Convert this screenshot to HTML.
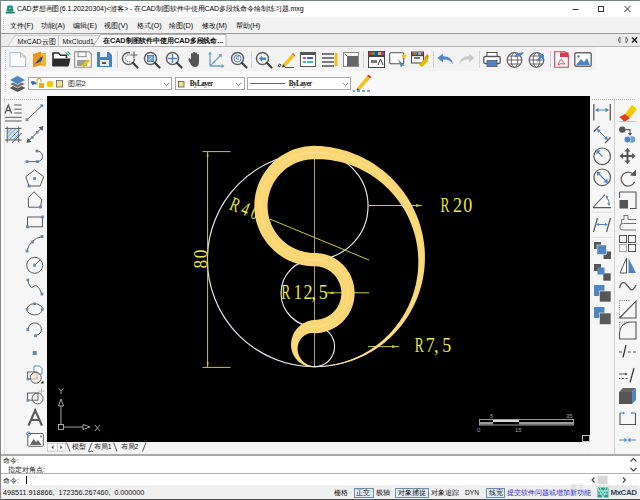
<!DOCTYPE html>
<html><head><meta charset="utf-8">
<style>
*{margin:0;padding:0;box-sizing:border-box}
html,body{width:640px;height:500px;overflow:hidden;background:#f0f0f0;font-family:"Liberation Sans",sans-serif;font-size:7px;color:#222}
.a{position:absolute}
.t{position:absolute;white-space:nowrap;line-height:1}
svg{position:absolute;overflow:visible}
</style></head><body>

<div class="a" style="left:0;top:0;width:640px;height:17px;background:#fff"></div>
<div class="a" style="left:0;top:0;width:640px;height:1px;background:#6f8577"></div>
<div class="a" style="left:0;top:17px;width:640px;height:16px;background:#f2f2f2"></div>
<div class="a" style="left:0;top:33px;width:640px;height:13px;background:#ececec;border-top:1px solid #9a9a9a"></div>
<div class="a" style="left:0;top:46px;width:640px;height:1px;background:#b4b4b4"></div>
<div class="a" style="left:0;top:47px;width:640px;height:49px;background:#f8f8f8"></div>
<div class="a" style="left:0;top:47px;width:596px;height:24px;background:#f3f3f3"></div>
<div class="a" style="left:0;top:96px;width:47px;height:359px;background:#f6f6f6"></div>
<div class="a" style="left:1px;top:96px;width:4px;height:358px;background:#fbfbfb;border-right:1px solid #e4e4e4"></div>
<div class="a" style="left:47px;top:96px;width:543px;height:346px;background:#000"></div>
<div class="a" style="left:590px;top:96px;width:50px;height:359px;background:#f6f6f6"></div>
<div class="a" style="left:614px;top:98px;width:1px;height:356px;background:#d0d0d0"></div>
<div class="a" style="left:47px;top:442px;width:543px;height:13px;background:#f4f4f4"></div>
<div class="a" style="left:0;top:454px;width:640px;height:2px;background:#a8a8a8"></div>
<div class="a" style="left:0;top:456px;width:640px;height:29px;background:#fff"></div>
<div class="a" style="left:0;top:473px;width:640px;height:1px;background:#b4b4b4"></div>
<div class="a" style="left:0;top:485px;width:640px;height:15px;background:#f0f0f0"></div>
<div class="a" style="left:0;top:499px;width:640px;height:1px;background:#505050"></div>
<div class="a" style="left:0;top:0;width:1px;height:500px;background:#8a8a8a"></div>
<svg style="left:5.0px;top:4.0px" width="11" height="10" viewBox="0 0 11 10"><path d="M2.5 1.5 h5 l1.2 6 h-7.4z" fill="#1a8f7a"/><path d="M0.5 8.2 q4.5 -1.5 9.5 -0.2 l-0.6 1.4 h-8.4z" fill="#13806c"/><path d="M4 5 l1-2 l1 2z" fill="#9fe8d5"/></svg>
<div class="t" style="left:17.0px;top:4.5px;font-size:7.0px;color:#000;letter-spacing:-0.05px;">CAD梦想画图(6.1.20220304)&lt;游客&gt; - 在CAD制图软件中使用CAD多段线命令绘制练习题.mxg</div>
<svg style="left:570.0px;top:4.0px" width="64" height="10" viewBox="0 0 64 10"><path d="M2.5 5.5 h6" stroke="#333" stroke-width="1"/><rect x="28.5" y="2.5" width="5" height="5" fill="none" stroke="#333"/><path d="M54.5 2 l6 6 M60.5 2 l-6 6" stroke="#333" stroke-width="1"/></svg>
<svg style="left:3.0px;top:19.0px" width="2" height="12" viewBox="0 0 2 12"><rect x="0" y="0" width="1" height="1" fill="#c4c4c4"/><rect x="0" y="2" width="1" height="1" fill="#c4c4c4"/><rect x="0" y="4" width="1" height="1" fill="#c4c4c4"/><rect x="0" y="6" width="1" height="1" fill="#c4c4c4"/><rect x="0" y="8" width="1" height="1" fill="#c4c4c4"/><rect x="0" y="10" width="1" height="1" fill="#c4c4c4"/></svg>
<div class="t" style="left:10.0px;top:21.5px;font-size:7.4px;color:#0a0a0a;">文件(F)</div>
<div class="t" style="left:41.0px;top:21.5px;font-size:7.4px;color:#0a0a0a;">功能(A)</div>
<div class="t" style="left:73.0px;top:21.5px;font-size:7.4px;color:#0a0a0a;">编辑(E)</div>
<div class="t" style="left:104.0px;top:21.5px;font-size:7.4px;color:#0a0a0a;">视图(V)</div>
<div class="t" style="left:137.0px;top:21.5px;font-size:7.4px;color:#0a0a0a;">格式(O)</div>
<div class="t" style="left:169.0px;top:21.5px;font-size:7.4px;color:#0a0a0a;">绘图(D)</div>
<div class="t" style="left:202.0px;top:21.5px;font-size:7.4px;color:#0a0a0a;">修改(M)</div>
<div class="t" style="left:236.0px;top:21.5px;font-size:7.4px;color:#0a0a0a;">帮助(H)</div>
<svg style="left:0.0px;top:33.0px" width="640" height="14" viewBox="0 0 640 14"><path d="M8 13 L15 2.5 H58.5 V13" fill="#f3f3f3" stroke="#c0c0c0" stroke-width="0.8"/><path d="M58.5 13 V2.5 H100 L93 13" fill="#f3f3f3" stroke="#c0c0c0" stroke-width="0.8"/><path d="M93 13.5 L100.5 1.5 H226 V13.5z" fill="#fbfbfb" stroke="#a8a8a8" stroke-width="0.8"/><path d="M620 4 l-2 3 l2 3z M626 4 l2 3 l-2 3z" fill="none" stroke="#555" stroke-width="0.8"/><path d="M632 4.5 l5 5 M637 4.5 l-5 5" stroke="#111" stroke-width="1.3"/></svg>
<div class="t" style="left:17.5px;top:37.5px;font-size:7.0px;color:#111;">MxCAD云图</div>
<div class="t" style="left:62.5px;top:37.5px;font-size:7.0px;color:#111;">MxCloud1</div>
<div class="t" style="left:103.0px;top:37.0px;font-size:7.4px;color:#111;font-weight:bold;letter-spacing:-0.1px;">在CAD制图软件中使用CAD多段线命...</div>
<svg style="left:5.0px;top:50.0px" width="2" height="20" viewBox="0 0 2 20"><rect x="0" y="0" width="1" height="1" fill="#c4c4c4"/><rect x="0" y="2" width="1" height="1" fill="#c4c4c4"/><rect x="0" y="4" width="1" height="1" fill="#c4c4c4"/><rect x="0" y="6" width="1" height="1" fill="#c4c4c4"/><rect x="0" y="8" width="1" height="1" fill="#c4c4c4"/><rect x="0" y="10" width="1" height="1" fill="#c4c4c4"/><rect x="0" y="12" width="1" height="1" fill="#c4c4c4"/><rect x="0" y="14" width="1" height="1" fill="#c4c4c4"/><rect x="0" y="16" width="1" height="1" fill="#c4c4c4"/><rect x="0" y="18" width="1" height="1" fill="#c4c4c4"/></svg>
<svg style="left:5.0px;top:75.0px" width="2" height="18" viewBox="0 0 2 18"><rect x="0" y="0" width="1" height="1" fill="#c4c4c4"/><rect x="0" y="2" width="1" height="1" fill="#c4c4c4"/><rect x="0" y="4" width="1" height="1" fill="#c4c4c4"/><rect x="0" y="6" width="1" height="1" fill="#c4c4c4"/><rect x="0" y="8" width="1" height="1" fill="#c4c4c4"/><rect x="0" y="10" width="1" height="1" fill="#c4c4c4"/><rect x="0" y="12" width="1" height="1" fill="#c4c4c4"/><rect x="0" y="14" width="1" height="1" fill="#c4c4c4"/><rect x="0" y="16" width="1" height="1" fill="#c4c4c4"/></svg>
<div class="a" style="left:117.0px;top:51px;width:1px;height:17px;background:#d4d4d4"></div>
<div class="a" style="left:251.0px;top:51px;width:1px;height:17px;background:#d4d4d4"></div>
<div class="a" style="left:363.0px;top:51px;width:1px;height:17px;background:#d4d4d4"></div>
<div class="a" style="left:432.5px;top:51px;width:1px;height:17px;background:#d4d4d4"></div>
<div class="a" style="left:479.0px;top:51px;width:1px;height:17px;background:#d4d4d4"></div>
<div class="a" style="left:549.5px;top:51px;width:1px;height:17px;background:#d4d4d4"></div>
<svg style="left:9.0px;top:52.0px" width="18" height="15" viewBox="0 0 18 15"><path d="M1 0.5 H11.5 L16.5 5 V14.5 H1z" fill="#fcfcfc" stroke="#b4c0cc" stroke-width="1.1"/><path d="M11.5 0.5 V5 H16.5" fill="none" stroke="#b4c0cc" stroke-width="1.1"/></svg>
<svg style="left:32.0px;top:51.0px" width="15" height="17" viewBox="0 0 15 17"><path d="M1 3 L9 0.5 V14 L1 16.5z" fill="#e8961c"/><path d="M9 2 H14 V15 H9z" fill="#f2b53a"/><path d="M3 13 Q7 7 11 5 L9.5 10z" fill="#1f4fa0"/></svg>
<svg style="left:52.0px;top:52.0px" width="19" height="15" viewBox="0 0 19 15"><path d="M1 14 V1 H6.5 L8.5 3.2 H14.5 V6" fill="#fff" stroke="#2b2b2b" stroke-width="1.6"/><path d="M1.5 6.5 H18.5 L16.5 14.5 H0.5z" fill="#2b2b2b"/><path d="M13.5 0.3 L17 3.5 M15.5 -0.5 L18.5 2.5" stroke="#3fae8a" stroke-width="1.1" fill="none"/></svg>
<svg style="left:74.0px;top:51.0px" width="18" height="17" viewBox="0 0 18 17"><path d="M0.7 0.7 H15 L17.3 3 V16.3 H0.7z" fill="#fafafa" stroke="#8a8a8a" stroke-width="1.1"/><rect x="4" y="0.7" width="8" height="5" fill="none" stroke="#8a8a8a"/><rect x="3" y="9" width="10" height="6" fill="#9c9c9c"/><path d="M7 15 L14 8 L16 10 L10 16z" fill="#e8c200"/></svg>
<svg style="left:96.0px;top:51.0px" width="17" height="17" viewBox="0 0 17 17"><path d="M1 1 H13 L16 4 V16 H1z" fill="#4a7fc0"/><rect x="4" y="1" width="7" height="5" fill="#e8eef6"/><rect x="4" y="9" width="9" height="6" fill="#e8eef6"/><rect x="6" y="11" width="4" height="2" fill="#555"/></svg>
<svg style="left:121.0px;top:51.0px" width="18" height="17" viewBox="0 0 18 17"><circle cx="7.5" cy="7.5" r="6" fill="#f8f8f8" stroke="#606060" stroke-width="1.5"/><path d="M11.8 11.8 L16.5 16.5" stroke="#404040" stroke-width="2.2" stroke-linecap="round"/><path d="M9.5 4.2 A3.6 3.6 0 1 0 9.5 10.8" stroke="#606060" fill="none" stroke-dasharray="1.2 0.8"/><rect x="9" y="0" width="8" height="8" fill="#f3f3f3"/><path d="M13 0.5 v7 M9.5 4 h7" stroke="#606060" stroke-width="1.1"/></svg>
<svg style="left:143.0px;top:51.0px" width="18" height="17" viewBox="0 0 18 17"><circle cx="7.5" cy="7.5" r="6" fill="#f8f8f8" stroke="#606060" stroke-width="1.5"/><path d="M11.8 11.8 L16.5 16.5" stroke="#404040" stroke-width="2.2" stroke-linecap="round"/><rect x="4.5" y="4.5" width="6" height="6" fill="#7aa8d8" stroke="#4f86c2"/><path d="M6 9 l3-3" stroke="#fff"/></svg>
<svg style="left:164.5px;top:51.0px" width="18" height="17" viewBox="0 0 18 17"><circle cx="7.5" cy="7.5" r="6" fill="#f8f8f8" stroke="#606060" stroke-width="1.5"/><path d="M11.8 11.8 L16.5 16.5" stroke="#404040" stroke-width="2.2" stroke-linecap="round"/><path d="M7.5 3 v9 M3 7.5 h9" stroke="#4f86c2" stroke-width="1.4"/></svg>
<svg style="left:188.0px;top:51.0px" width="14" height="17" viewBox="0 0 14 17"><path d="M3 8 V3 a1 1 0 0 1 2 0 V7 V1.8 a1 1 0 0 1 2 0 V7 V2.5 a1 1 0 0 1 2 0 V8 V4 a1 1 0 0 1 2 0 V11 Q11 16 7 16 Q4 16 2.5 13 L0.5 9 a1 1 0 0 1 2 -1z" fill="#555"/></svg>
<svg style="left:208.0px;top:51.0px" width="17" height="17" viewBox="0 0 17 17"><path d="M2 15 V2 M2 15 H15.5 M2 15 L13 4" stroke="#6a9fd0" stroke-width="1.3" fill="none"/><path d="M2 0.5 l-2 3 h4z M16.5 15 l-3 -2 v4z M14 3 l-3.5 0.5 l3 3z" fill="#6a9fd0"/></svg>
<svg style="left:229.5px;top:51.0px" width="18" height="17" viewBox="0 0 18 17"><circle cx="7.5" cy="7.5" r="6" fill="#f8f8f8" stroke="#606060" stroke-width="1.5"/><path d="M11.8 11.8 L16.5 16.5" stroke="#404040" stroke-width="2.2" stroke-linecap="round"/><circle cx="7.5" cy="7.5" r="3.5" fill="none" stroke="#4f86c2" stroke-width="1"/><path d="M9 6 q-2-1.5-3 0.5 q0 2.5 3 1.5" fill="none" stroke="#4f86c2"/></svg>
<svg style="left:255.0px;top:51.0px" width="18" height="17" viewBox="0 0 18 17"><circle cx="7.5" cy="7.5" r="6" fill="#f8f8f8" stroke="#606060" stroke-width="1.5"/><path d="M11.8 11.8 L16.5 16.5" stroke="#404040" stroke-width="2.2" stroke-linecap="round"/><path d="M4 7.5 l3 -3 v2 h4 v2.5 h-4 v2z" fill="#4f86c2"/></svg>
<svg style="left:277.0px;top:51.0px" width="18" height="17" viewBox="0 0 18 17"><path d="M6 13 L15 3 L17.5 5.5 L8.5 15.5z" fill="#f5c21a"/><path d="M15 3 L16 2 L18 4 L17.5 5.5z" fill="#e05030"/><path d="M6 13 L5 16.5 L8.5 15.5z" fill="#444"/><path d="M1 16 q1 -5 3 -2 q-1 2 -2 2" fill="none" stroke="#333" stroke-width="0.9"/><path d="M8 16.5 h9" stroke="#444" stroke-width="0.9"/></svg>
<svg style="left:300.0px;top:52.0px" width="16" height="15" viewBox="0 0 16 15"><rect x="0.5" y="0.5" width="15" height="14" fill="#fff" stroke="#555" stroke-width="1"/><rect x="0.5" y="0.5" width="15" height="2.5" fill="#555"/><rect x="3" y="5" width="3" height="2" fill="#c040c0"/><rect x="7" y="5" width="6" height="2" fill="#4060c0"/><rect x="3" y="9" width="3" height="2" fill="#40c0a0"/><rect x="7" y="9" width="6" height="2" fill="#40b0e0"/></svg>
<svg style="left:321.5px;top:52.0px" width="16" height="15" viewBox="0 0 16 15"><path d="M0 2 H12 M0 6 H12 M0 10 H12 M0 14 H12" stroke="#555" stroke-width="1.6"/><rect x="12.5" y="1" width="3" height="13" fill="#f0c020"/></svg>
<svg style="left:343.0px;top:52.0px" width="16" height="15" viewBox="0 0 16 15"><rect x="0.5" y="0.5" width="15" height="14" fill="#fff" stroke="#8a8a8a"/><rect x="4" y="4" width="11" height="10" fill="#666"/><path d="M1.5 1.5 l3 3" stroke="#4f86c2"/></svg>
<svg style="left:367.5px;top:51.0px" width="17" height="17" viewBox="0 0 17 17"><rect x="0.5" y="0.5" width="16" height="16" fill="#fff" stroke="#444"/><rect x="1" y="1" width="3" height="3" fill="#e03030"/><rect x="4" y="1" width="3" height="3" fill="#30a030"/><rect x="7" y="1" width="3" height="3" fill="#3040d0"/><rect x="10" y="1" width="3" height="3" fill="#d0c020"/><rect x="13" y="1" width="3" height="3" fill="#a030c0"/><rect x="1" y="4" width="15" height="2" fill="#444"/><rect x="3" y="9" width="6" height="3" fill="#777"/><path d="M10 14 l2.5 -6 l2.5 6" fill="none" stroke="#333"/></svg>
<svg style="left:389.0px;top:51.0px" width="18" height="17" viewBox="0 0 18 17"><rect x="0.7" y="1.7" width="14" height="11" fill="#fff" stroke="#555" stroke-width="1.1" rx="1"/><path d="M9 8 l7 7 l-2.5 -0.5 l-1.5 2z" fill="#4f86c2"/><path d="M15 2 l1 2 l2 0.5 l-1.5 1.5 l0.3 2 l-1.8 -1 l-1.8 1 l0.3 -2 l-1.5-1.5 l2-0.5z" fill="#f0c020"/></svg>
<svg style="left:411.0px;top:51.0px" width="18" height="17" viewBox="0 0 18 17"><rect x="0.5" y="1" width="12" height="11" fill="#fff" stroke="#444"/><rect x="1" y="1.5" width="2.2" height="2.5" fill="#e03030"/><rect x="3.2" y="1.5" width="2.2" height="2.5" fill="#30a030"/><rect x="5.4" y="1.5" width="2.2" height="2.5" fill="#3040d0"/><rect x="7.6" y="1.5" width="2.2" height="2.5" fill="#d0c020"/><rect x="9.8" y="1.5" width="2.2" height="2.5" fill="#a030c0"/><rect x="1" y="4" width="11" height="1.2" fill="#444"/><rect x="3" y="6" width="6" height="2" fill="#777"/><path d="M8 14 L14 7 L17.5 10 L11 16z" fill="#e8b800"/><path d="M13 7 L16 3 L18 5 L16.5 9z" fill="#d9a000"/></svg>
<svg style="left:437.0px;top:53.0px" width="17" height="12" viewBox="0 0 17 12"><path d="M6 0.5 L0.5 5 L6 9.5 V6.5 Q13 6 16 11.5 Q15 3 6 3.2z" fill="#4f86c2"/></svg>
<svg style="left:458.0px;top:53.0px" width="17" height="12" viewBox="0 0 17 12"><path d="M11 0.5 L16.5 5 L11 9.5 V6.5 Q4 6 1 11.5 Q2 3 11 3.2z" fill="#c8c8c8"/></svg>
<svg style="left:483.0px;top:52.0px" width="18" height="15" viewBox="0 0 18 15"><rect x="4" y="0.5" width="10" height="4" fill="#fff" stroke="#555"/><rect x="0.8" y="4.5" width="16.4" height="7" rx="1.5" fill="#fff" stroke="#555" stroke-width="1.3"/><rect x="4" y="8.5" width="10" height="6" fill="#4f86c2" stroke="#555" stroke-width="0.8"/></svg>
<svg style="left:505.5px;top:51.0px" width="18" height="17" viewBox="0 0 18 17"><circle cx="8.5" cy="9" r="7.3" fill="#fff" stroke="#666" stroke-width="1.3"/><ellipse cx="8.5" cy="9" rx="3.3" ry="7.3" fill="none" stroke="#666"/><path d="M1.2 9 H15.8 M2.5 5 H14.5 M2.5 13 H14.5" stroke="#666"/><path d="M10 5 q2 -4 6 -3 l-1 -1.5 l3 1.5 l-2.5 2z" fill="#4f86c2"/><path d="M9 6 q3-4 7-3" stroke="#4f86c2" stroke-width="2" fill="none"/></svg>
<svg style="left:527.5px;top:51.0px" width="18" height="17" viewBox="0 0 18 17"><circle cx="8.5" cy="9" r="7.3" fill="#fff" stroke="#666" stroke-width="1.3"/><ellipse cx="8.5" cy="9" rx="3.3" ry="7.3" fill="none" stroke="#666"/><path d="M1.2 9 H15.8 M2.5 5 H14.5 M2.5 13 H14.5" stroke="#666"/><path d="M9 10 L15 4 M15 4 h-4 M15 4 v4" stroke="#4f86c2" stroke-width="2" fill="none"/></svg>
<svg style="left:553.5px;top:51.0px" width="15" height="17" viewBox="0 0 15 17"><path d="M0.7 0.7 H11 L14.3 4 V16.3 H0.7z" fill="#fff" stroke="#d83a4a" stroke-width="1.1"/><rect x="6" y="1.5" width="8.5" height="4.5" fill="#d83a4a"/><path d="M4 14 Q7 6 8 9 Q9 12 11 13 Q6 12 4 14z" fill="none" stroke="#d83a4a" stroke-width="0.9"/></svg>
<svg style="left:573.5px;top:52.0px" width="18" height="15" viewBox="0 0 18 15"><rect x="0.8" y="0.8" width="16.4" height="13.4" rx="1.5" fill="#fff" stroke="#666" stroke-width="1.4"/><circle cx="4.5" cy="4.5" r="1.2" fill="#4f86c2"/><path d="M2 13 L7 7 L10 10 L13 6 L16 13z" fill="#4f86c2"/></svg>
<svg style="left:9.0px;top:75.0px" width="17" height="17" viewBox="0 0 17 17"><path d="M8.5 9 L0.5 13 L8.5 17 L16.5 13z" fill="#555"/><path d="M8.5 5 L0.5 9 L8.5 13 L16.5 9z" fill="#777" stroke="#f8f8f8" stroke-width="0.6"/><path d="M8.5 0.5 L0.5 5 L8.5 9.5 L16.5 5z" fill="#4f86c2" stroke="#f8f8f8" stroke-width="0.6"/></svg>
<div class="a" style="left:28px;top:77px;width:144px;height:13px;background:#fff;border:1px solid #a8a8a8"></div>
<svg style="left:30.0px;top:79.0px" width="36" height="9" viewBox="0 0 36 9"><path d="M0.5 3 q2 -2 5 0 l1 2 l-4 1z" fill="#3a70b0"/><path d="M7 6 V1.5 a2 2 0 0 1 4 0 V3" fill="none" stroke="#c8a020" stroke-width="1.1"/><rect x="9" y="4" width="5" height="5" fill="#e0b020"/><circle cx="20" cy="5" r="3.3" fill="#f8c800"/><rect x="26.5" y="1.5" width="6" height="6.5" fill="#f4e090" stroke="#666" stroke-width="0.8"/></svg>
<div class="t" style="left:67.5px;top:79.5px;font-size:7.4px;color:#222;">图层2</div>
<svg style="left:163.0px;top:81.5px" width="7" height="5" viewBox="0 0 7 5"><path d="M1 1 L3.5 3.5 L6 1" fill="none" stroke="#777" stroke-width="0.9"/></svg>
<div class="a" style="left:174.5px;top:77px;width:70px;height:13px;background:#fff;border:1px solid #a8a8a8"></div>
<svg style="left:178.0px;top:81.0px" width="6" height="6" viewBox="0 0 6 6"><rect x="0.5" y="0.5" width="5.5" height="5.5" fill="#f4e090" stroke="#555" stroke-width="0.8"/></svg>
<div class="t" style="left:189.7px;top:80.6px;font-size:7.2px;color:#1a1a1a;font-weight:bold;font-family:'Liberation Serif',serif;letter-spacing:-0.55px;">ByLayer</div>
<svg style="left:235.0px;top:81.5px" width="7" height="5" viewBox="0 0 7 5"><path d="M1 1 L3.5 3.5 L6 1" fill="none" stroke="#777" stroke-width="0.9"/></svg>
<div class="a" style="left:247px;top:77px;width:104px;height:13px;background:#fff;border:1px solid #a8a8a8"></div>
<div class="a" style="left:249.5px;top:83px;width:35.5px;height:1.2px;background:#666"></div>
<div class="t" style="left:288.8px;top:80.6px;font-size:7.2px;color:#1a1a1a;font-weight:bold;font-family:'Liberation Serif',serif;letter-spacing:-0.55px;">ByLayer</div>
<svg style="left:342.0px;top:81.5px" width="7" height="5" viewBox="0 0 7 5"><path d="M1 1 L3.5 3.5 L6 1" fill="none" stroke="#777" stroke-width="0.9"/></svg>
<svg style="left:352.5px;top:74.0px" width="19" height="18" viewBox="0 0 19 18"><path d="M4 14 L14 2 L17 4.5 L7 16z" fill="#f5c21a"/><path d="M14 2 L15.5 0.5 L18.5 3 L17 4.5z" fill="#d04030"/><path d="M4 14 L3.5 16.5 L7 16z" fill="#555"/><path d="M0 17 h2 M4 17 h3 M9 17 h3 M14 17 h3" stroke="#4f86c2" stroke-width="1.4"/></svg>
<svg style="left:4px;top:99px" width="40" height="1"><rect x="0" y="0" width="1" height="1" fill="#b8b8b8"/><rect x="2" y="0" width="1" height="1" fill="#b8b8b8"/><rect x="4" y="0" width="1" height="1" fill="#b8b8b8"/><rect x="6" y="0" width="1" height="1" fill="#b8b8b8"/><rect x="8" y="0" width="1" height="1" fill="#b8b8b8"/><rect x="10" y="0" width="1" height="1" fill="#b8b8b8"/><rect x="12" y="0" width="1" height="1" fill="#b8b8b8"/><rect x="14" y="0" width="1" height="1" fill="#b8b8b8"/><rect x="16" y="0" width="1" height="1" fill="#b8b8b8"/><rect x="18" y="0" width="1" height="1" fill="#b8b8b8"/><rect x="20" y="0" width="1" height="1" fill="#b8b8b8"/><rect x="22" y="0" width="1" height="1" fill="#b8b8b8"/><rect x="24" y="0" width="1" height="1" fill="#b8b8b8"/><rect x="26" y="0" width="1" height="1" fill="#b8b8b8"/><rect x="28" y="0" width="1" height="1" fill="#b8b8b8"/><rect x="30" y="0" width="1" height="1" fill="#b8b8b8"/><rect x="32" y="0" width="1" height="1" fill="#b8b8b8"/><rect x="34" y="0" width="1" height="1" fill="#b8b8b8"/><rect x="36" y="0" width="1" height="1" fill="#b8b8b8"/><rect x="38" y="0" width="1" height="1" fill="#b8b8b8"/></svg>
<svg style="left:592px;top:99px" width="44" height="1"><rect x="0" y="0" width="1" height="1" fill="#b8b8b8"/><rect x="2" y="0" width="1" height="1" fill="#b8b8b8"/><rect x="4" y="0" width="1" height="1" fill="#b8b8b8"/><rect x="6" y="0" width="1" height="1" fill="#b8b8b8"/><rect x="8" y="0" width="1" height="1" fill="#b8b8b8"/><rect x="10" y="0" width="1" height="1" fill="#b8b8b8"/><rect x="12" y="0" width="1" height="1" fill="#b8b8b8"/><rect x="14" y="0" width="1" height="1" fill="#b8b8b8"/><rect x="16" y="0" width="1" height="1" fill="#b8b8b8"/><rect x="18" y="0" width="1" height="1" fill="#b8b8b8"/><rect x="20" y="0" width="1" height="1" fill="#b8b8b8"/><rect x="22" y="0" width="1" height="1" fill="#b8b8b8"/><rect x="24" y="0" width="1" height="1" fill="#b8b8b8"/><rect x="26" y="0" width="1" height="1" fill="#b8b8b8"/><rect x="28" y="0" width="1" height="1" fill="#b8b8b8"/><rect x="30" y="0" width="1" height="1" fill="#b8b8b8"/><rect x="32" y="0" width="1" height="1" fill="#b8b8b8"/><rect x="34" y="0" width="1" height="1" fill="#b8b8b8"/><rect x="36" y="0" width="1" height="1" fill="#b8b8b8"/><rect x="38" y="0" width="1" height="1" fill="#b8b8b8"/><rect x="40" y="0" width="1" height="1" fill="#b8b8b8"/><rect x="42" y="0" width="1" height="1" fill="#b8b8b8"/></svg>
<svg style="left:0;top:0" width="640" height="500"><path d="M5 113.5 L8.3 105 L11.6 113.5 M6.3 110.5 H10.3" fill="none" stroke="#5a5a5a" stroke-width="1.3"/><path d="M14.2 105 H21.6 M14.2 109.2 H21.6 M14.2 113 H21.6 M5 117.3 H21.6 M5 121 H21.6" stroke="#5a5a5a" stroke-width="1.0"/><rect x="7.2" y="128.4" width="11.5" height="11.6" fill="#cfe0f0"/><path d="M7.5 133 l4.5 -4.5 M7.5 137 l8.5 -8.5 M9 140 l9.5 -9.5 M13 140 l5.5 -5.5" stroke="#4f86c2" stroke-width="0.8"/><path d="M5 128.4 H21.6 M5 140 H21.6 M7.2 126.5 V142.5 M18.7 126.5 V142.5 M12 143 L21.6 133" stroke="#5a5a5a" stroke-width="0.95" fill="none"/><path d="M27 119.8 L41.8 105.8" stroke="#5a5a5a" stroke-width="0.95"/><rect x="25.6" y="118.4" width="2.8" height="2.8" fill="#6788b0"/><rect x="40.4" y="104.4" width="2.8" height="2.8" fill="#6788b0"/><path d="M27.5 142 L42.5 127" stroke="#5a5a5a" stroke-width="1.0"/><path d="M26.5 143 l1.2 -5 l3.8 3.8z M43.5 126 l-1.2 5 l-3.8 -3.8z" fill="#5a5a5a"/><rect x="30.9" y="136.2" width="2.6" height="2.6" fill="#6788b0"/><rect x="35.9" y="131.0" width="2.6" height="2.6" fill="#6788b0"/><path d="M27 161.6 H37.5 A5.3 5.3 0 0 0 37 151" fill="none" stroke="#5a5a5a" stroke-width="0.95"/><rect x="25.6" y="160.2" width="2.8" height="2.8" fill="#6788b0"/><rect x="36.1" y="160.2" width="2.8" height="2.8" fill="#6788b0"/><rect x="35.6" y="149.6" width="2.8" height="2.8" fill="#6788b0"/><path d="M34.6 170 L43.7 176.6 L40.2 186 L29 186 L25.8 176.6z" fill="none" stroke="#5a5a5a" stroke-width="1.0"/><rect x="33.2" y="177.1" width="2.8" height="2.8" fill="#6788b0"/><rect x="27.6" y="184.6" width="2.8" height="2.8" fill="#6788b0"/><path d="M34 191.8 L41.8 199.5 L40.5 207.2 L28.5 207.2 L28.3 197.5z" fill="none" stroke="#5a5a5a" stroke-width="1.0"/><rect x="39.1" y="205.6" width="2.8" height="2.8" fill="#6788b0"/><rect x="27.5" y="217" width="15" height="9.8" fill="none" stroke="#5a5a5a" stroke-width="1.0"/><rect x="41.1" y="215.6" width="2.8" height="2.8" fill="#6788b0"/><rect x="26.1" y="225.4" width="2.8" height="2.8" fill="#6788b0"/><path d="M27 251 Q30 239 42 236.5" fill="none" stroke="#5a5a5a" stroke-width="1.0"/><rect x="25.6" y="249.6" width="2.8" height="2.8" fill="#6788b0"/><rect x="31.1" y="240.6" width="2.8" height="2.8" fill="#6788b0"/><rect x="40.6" y="235.1" width="2.8" height="2.8" fill="#6788b0"/><circle cx="34.7" cy="265.3" r="8" fill="none" stroke="#5a5a5a" stroke-width="1.0"/><path d="M34.7 265.3 L40 260" stroke="#5a5a5a" stroke-width="0.95"/><rect x="33.3" y="263.9" width="2.8" height="2.8" fill="#6788b0"/><path d="M27.8 280 Q30 289 33 287 Q37 282 42 294" fill="none" stroke="#5a5a5a" stroke-width="1.0"/><rect x="26.4" y="278.6" width="2.8" height="2.8" fill="#6788b0"/><rect x="40.6" y="292.6" width="2.8" height="2.8" fill="#6788b0"/><ellipse cx="34.7" cy="309.3" rx="7.7" ry="5.6" fill="none" stroke="#5a5a5a" stroke-width="1.0"/><rect x="33.4" y="302.5" width="2.6" height="2.6" fill="#6788b0"/><rect x="25.7" y="308.0" width="2.6" height="2.6" fill="#6788b0"/><rect x="41.1" y="308.0" width="2.6" height="2.6" fill="#6788b0"/><path d="M28 329 Q30 322 36 323 Q43 325 41 332 Q39 335 36 335.5" fill="none" stroke="#5a5a5a" stroke-width="1.0"/><rect x="26.4" y="328.1" width="2.8" height="2.8" fill="#6788b0"/><rect x="34.1" y="334.4" width="2.8" height="2.8" fill="#6788b0"/><rect x="32.7" y="351.0" width="4.0" height="4.0" fill="#6788b0"/><path d="M34 366 H39.5 L42 368.5 V374 H34z" fill="#fff" stroke="#4f86c2" stroke-width="1"/><rect x="27.5" y="372" width="9.5" height="7" fill="#f4f4f4" stroke="#5a5a5a" stroke-width="0.95"/><circle cx="35.8" cy="377.8" r="5.5" fill="#f8e8d8" fill-opacity="0.6" stroke="#5a5a5a" stroke-width="0.95"/><rect x="26.6" y="377.8" width="2.5" height="2.5" fill="#6788b0"/><path d="M40.5 383.5 L43.5 380.5 V383.5z" fill="#222"/><rect x="27.5" y="393" width="10.5" height="7.2" fill="none" stroke="#5a5a5a" stroke-width="0.95"/><circle cx="37.6" cy="398.5" r="5.5" fill="none" stroke="#5a5a5a" stroke-width="0.95"/><path d="M41.5 388 v6 M38.5 391 h6" stroke="#aaa" stroke-width="0.8"/><rect x="26.6" y="399.2" width="2.5" height="2.5" fill="#6788b0"/><path d="M28.5 425.6 L35.2 410.4 L42 425.6 M31 420 H39.5" fill="none" stroke="#5a5a5a" stroke-width="2.2"/><rect x="27.8" y="433.5" width="15.5" height="12.8" rx="1" fill="#fff" stroke="#5a5a5a" stroke-width="1.0"/><path d="M30 445 L33.5 439 L36 442 L38 440 L41.5 445z" fill="#666"/><circle cx="41" cy="436.5" r="0.9" fill="#666"/><circle cx="28.5" cy="434" r="2" fill="none" stroke="#4f86c2" stroke-width="0.9"/><path d="M593.8 104 V120.4 M610.3 104 V120.4" stroke="#5a5a5a" stroke-width="1.3"/><path d="M597 110 H607" stroke="#4f86c2" stroke-width="1"/><path d="M595 110 l3.5 -2.2 v4.4z M609 110 l-3.5 -2.2 v4.4z" fill="#4f86c2"/><path d="M594 131.5 L599.5 126 M605 143 L610.5 137.5" stroke="#5a5a5a" stroke-width="1.3"/><path d="M597.5 129.5 L607.5 139.5" stroke="#4f86c2" stroke-width="1"/><path d="M597 129 l4 1 l-3 3z M608 140 l-4 -1 l3 -3z" fill="#4f86c2"/><circle cx="602.2" cy="156.3" r="8.3" fill="none" stroke="#5a5a5a" stroke-width="1.2"/><path d="M602.5 156.5 L597 151" stroke="#4f86c2" stroke-width="1.1"/><path d="M596 150 l4.5 0.8 l-3.7 3.7z" fill="#4f86c2"/><circle cx="602.2" cy="177.3" r="8.3" fill="none" stroke="#5a5a5a" stroke-width="1.2"/><path d="M597.5 172.5 L607 182" stroke="#4f86c2" stroke-width="1.1"/><path d="M596.5 171.5 l4.5 0.8 l-3.7 3.7z M608 183 l-4.5 -0.8 l3.7 -3.7z" fill="#4f86c2"/><path d="M593.5 207 L605 194.5 M593 207.6 H611" stroke="#5a5a5a" stroke-width="1.1"/><path d="M606.5 197 Q610 201 609 205" fill="none" stroke="#4f86c2" stroke-width="1"/><path d="M605.5 195.5 l3 1.2 l-2.5 2z M609.5 206 l-2.4 -2.5 l3 -0.5z" fill="#4f86c2"/><path d="M592 212.4 H612 M592 237.4 H612" stroke="#d8d8d8" stroke-width="0.8"/><path d="M593.5 232 L597.5 218 M606.5 232 L610.5 218" stroke="#5a5a5a" stroke-width="1.2"/><path d="M597 224.5 H607" stroke="#4f86c2" stroke-width="1"/><path d="M596 224.5 l3 -1.6 v3.2z M608 224.5 l-3 -1.6 v3.2z" fill="#4f86c2"/><rect x="594" y="242" width="7" height="7" fill="#555"/><rect x="603.5" y="251.5" width="7.5" height="7.5" fill="#555"/><rect x="597" y="245" width="9.5" height="9.5" fill="#4f86c2" stroke="#f6f6f6" stroke-width="0.6"/><rect x="594" y="264" width="7" height="7" fill="#555"/><rect x="603" y="273" width="8" height="8" fill="#555" stroke="#f6f6f6" stroke-width="0.6"/><rect x="597.5" y="267.5" width="7" height="7" fill="#4f86c2"/><rect x="594" y="285" width="10.5" height="11" fill="#4f86c2"/><rect x="599.5" y="291" width="11.5" height="11" fill="#555" stroke="#f6f6f6" stroke-width="0.6"/><rect x="594" y="307" width="10.5" height="11" fill="#4f86c2"/><rect x="599.5" y="313" width="11.5" height="11.5" fill="#5a5a5a" stroke="#f6f6f6" stroke-width="0.6"/><path d="M625 114 L632 105 L637 109 L630 118z" fill="#f5c800"/><path d="M619.5 117 L625 114 L630 118 L624.5 122z" fill="#e04020"/><path d="M619 121.5 H636" stroke="#9cc0e0" stroke-width="0.8"/><circle cx="622.3" cy="129.6" r="3.2" fill="#555"/><path d="M625.5 129.6 H630 V134" fill="none" stroke="#555" stroke-width="1.1"/><path d="M628 133 l2 3 l2 -3z" fill="#555"/><circle cx="632" cy="139.5" r="3.3" fill="#6a9fd0"/><circle cx="627.5" cy="139.5" r="3.3" fill="#4f86c2" stroke="#f6f6f6" stroke-width="0.6"/><path d="M627.5 148 l3 3.5 h-2 v3.5 h3.5 v-2 l3.5 3 l-3.5 3 v-2 h-3.5 v3.5 h2 l-3 3.5 l-3 -3.5 h2 v-3.5 h-3.5 v2 l-3.5 -3 l3.5 -3 v2 h3.5 v-3.5 h-2z" fill="#555"/><path d="M633.5 174.5 A7 7 0 1 0 634.5 182" fill="none" stroke="#555" stroke-width="1.2"/><path d="M636 169.5 L636 176 L630 175.5z" fill="#555"/><path d="M619.5 192 H636 V208.5 H630 M619.5 192 V198" fill="none" stroke="#555" stroke-width="1.1"/><rect x="619.5" y="200" width="8.5" height="8.5" fill="#555"/><path d="M623.5 215.5 H628 V219.5 H636 M636 223.5 H623.5 Q620 223.5 620 226 V228 Q620 230 623 230 H636" fill="none" stroke="#777" stroke-width="1"/><path d="M621.5 224 V219.5 H624 V215.5" fill="none" stroke="#777" stroke-width="1"/><rect x="619.5" y="235.5" width="7" height="7" fill="none" stroke="#555"/><rect x="628.5" y="235.5" width="7" height="7" fill="none" stroke="#555"/><rect x="619.5" y="244.5" width="7" height="7" fill="none" stroke="#aaa"/><rect x="628.5" y="244.5" width="7" height="7" fill="none" stroke="#555"/><path d="M626.5 258 V273 H620z" fill="#fff" stroke="#555" stroke-width="1"/><path d="M628.5 258 V273 H636z" fill="#4f86c2"/><path d="M619.5 288 Q621 281 625 283 Q628 286 630 289 Q633 292 636 285" fill="none" stroke="#555" stroke-width="1.3"/><path d="M619.5 318 L636 301 V318z" fill="none" stroke="#555" stroke-width="1.1"/><path d="M619.5 300.5 H630 M619.5 300.5 V317" stroke="#888" stroke-width="1" stroke-dasharray="1 1.2"/><path d="M619.5 339 V333 Q620.5 323 630 322 H636 V339z" fill="none" stroke="#555" stroke-width="1.1"/><path d="M619.5 322 H630 M619.5 322 V333" stroke="#888" stroke-width="1" stroke-dasharray="1 1.2"/><path d="M619 352 H622 M628 352 H631 M633 352 H636" stroke="#555" stroke-width="1.1"/><path d="M623 357.5 L626 345" stroke="#333" stroke-width="1.2"/><path d="M619 374 H627 M619 378.5 H620.5 M622 378.5 H624 M625.5 378.5 H627.5" stroke="#555" stroke-width="1.1"/><path d="M627.5 374 l-2.5 -1.6 v3.2z" fill="#555"/><path d="M630 382.5 L634 368" stroke="#333" stroke-width="1.2"/><path d="M619 392 L623 388 H636 L632 392z" fill="#666"/><rect x="619" y="392" width="13" height="12" fill="#555"/><path d="M632 392 L636 388 V400 L632 404z" fill="#4f86c2"/><path d="M620 413 V424.5 H635.5 V413" fill="none" stroke="#555" stroke-width="1.1"/><path d="M620 413 H623.5 M635.5 413 H632" stroke="#4f86c2" stroke-width="1.1"/><path d="M625 413 l-2 -1.5 v3z M630.5 413 l2 -1.5 v3z" fill="#4f86c2"/><path d="M619 440 H626 M629 440 H636" stroke="#4f86c2" stroke-width="1.2"/><path d="M627.5 440 l-3 -2.2 v4.4z M627.5 440 l3 -2.2 v4.4z" fill="#4f86c2"/><path d="M627.5 436 v8" stroke="#cfe0f0" stroke-width="1"/></svg>
<svg style="left:47.0px;top:442.0px" width="110" height="13" viewBox="0 0 110 13"><rect x="0.5" y="1.2" width="10" height="8" fill="#fafafa" stroke="#c4c4c4" stroke-width="0.8"/><rect x="10.5" y="1.2" width="8" height="8" fill="#fafafa" stroke="#c4c4c4" stroke-width="0.8"/><path d="M6.5 3.3 l-2.2 2 l2.2 2z" fill="#555"/><path d="M13.3 3.3 l2.2 2 l-2.2 2z" fill="#555"/><path d="M19.5 0.5 L23 9.5" fill="none" stroke="#333" stroke-width="0.8"/><path d="M45 0.5 L41.5 9.5 L42.5 10 M46 10 L45 9 L42 9.5" fill="none" stroke="#333" stroke-width="0.8"/><path d="M66.5 0.5 L70 9.5" fill="none" stroke="#333" stroke-width="0.8"/><path d="M99 0.5 L95.5 9.5" fill="none" stroke="#333" stroke-width="0.8"/></svg>
<div class="t" style="left:72.4px;top:444.3px;font-size:6.8px;color:#111;">模型</div>
<div class="t" style="left:93.8px;top:444.3px;font-size:6.8px;color:#222;">布局1</div>
<div class="t" style="left:120.5px;top:444.3px;font-size:6.8px;color:#222;">布局2</div>
<div class="t" style="left:3.0px;top:456.5px;font-size:7.0px;color:#222;">命令:</div>
<div class="t" style="left:7.8px;top:466.0px;font-size:7.4px;color:#111;">指定对角点:</div>
<div class="t" style="left:3.0px;top:477.0px;font-size:7.0px;color:#222;">命令:</div>
<div class="a" style="left:26px;top:476px;width:1.3px;height:8px;background:#111"></div>
<svg style="left:628.0px;top:456.0px" width="10" height="18" viewBox="0 0 10 18"><path d="M2.5 5.5 L5.5 2.5 L8.5 5.5 M2.5 12 L5.5 15 L8.5 12" fill="none" stroke="#444" stroke-width="1.1"/></svg>
<svg style="left:590.0px;top:475.0px" width="40" height="10" viewBox="0 0 40 10"><path d="M4.5 2.5 L2 5 L4.5 7.5 M33 2.5 L35.5 5 L33 7.5" fill="none" stroke="#444" stroke-width="1.1"/><rect x="7.5" y="1" width="10" height="8" fill="#d8d8d8"/></svg>
<div class="t" style="left:3.0px;top:489.0px;font-size:7.2px;color:#111;">498511.918866,&nbsp; 172356.267460,&nbsp; 0.000000</div>
<div class="a" style="left:353.5px;top:488px;width:20.0px;height:10px;background:#e4eef8;border:1px solid #6a8db0"></div>
<div class="a" style="left:395.0px;top:488px;width:33.5px;height:10px;background:#e4eef8;border:1px solid #6a8db0"></div>
<div class="a" style="left:486.0px;top:488px;width:19.0px;height:10px;background:#e4eef8;border:1px solid #6a8db0"></div>
<div class="t" style="left:334.0px;top:490.0px;font-size:6.6px;color:#111;">栅格</div>
<div class="t" style="left:356.0px;top:490.0px;font-size:6.6px;color:#111;">正交</div>
<div class="t" style="left:376.0px;top:490.0px;font-size:6.6px;color:#111;">极轴</div>
<div class="t" style="left:398.0px;top:490.0px;font-size:6.6px;color:#111;">对象捕捉</div>
<div class="t" style="left:431.0px;top:490.0px;font-size:6.6px;color:#111;">对象追踪</div>
<div class="t" style="left:465.0px;top:490.0px;font-size:6.6px;color:#111;">DYN</div>
<div class="t" style="left:488.5px;top:490.0px;font-size:6.6px;color:#111;">线宽</div>
<div class="t" style="left:507.0px;top:490.0px;font-size:6.9px;color:#2020d0;">提交软件问题或增加新功能</div>
<div class="t" style="left:570.0px;top:483.5px;font-size:6.5px;color:#d6d6d6;">激活</div>
<div class="t" style="left:595.0px;top:483.0px;font-size:10.5px;color:#dadada;">Windows</div>
<svg style="left:597.0px;top:487.0px" width="12" height="11" viewBox="0 0 12 11"><rect x="0.5" y="0.5" width="11" height="10" fill="#1f9e8a"/><path d="M0.5 0.5 L6 10.5 L11.5 0.5 M3 0.5 L6 6 L9 0.5 M0.5 4 H11.5 M0.5 7 H11.5" stroke="#e8f8f4" stroke-width="0.8" fill="none"/></svg>
<div class="t" style="left:610.5px;top:488.5px;font-size:8.0px;color:#2e3e5e;font-weight:bold;letter-spacing:-0.5px;">MxCAD</div>
<svg width="640" height="500" style="left:0;top:0">
<g fill="none" stroke-width="1">
<circle cx="314.50" cy="259.60" r="107.10" stroke="#e6e6f0" stroke-width="1.1"/>
<circle cx="314.50" cy="206.05" r="53.55" stroke="#e6e6f0" stroke-width="1.1"/>
<circle cx="314.50" cy="293.07" r="33.47" stroke="#e6e6f0" stroke-width="1.1"/>
<circle cx="314.50" cy="346.62" r="20.08" stroke="#e6e6f0" stroke-width="1.1"/>
<line x1="314.5" y1="157.0" x2="314.5" y2="366.0" stroke="#a89c78" stroke-width="1.1"/>
<line x1="207.6" y1="152" x2="207.6" y2="367" stroke="#c8c83c"/>
<line x1="202.5" y1="151.6" x2="230.5" y2="151.6" stroke="#c8c83c"/>
<line x1="202.5" y1="367.4" x2="230.5" y2="367.4" stroke="#c8c83c"/>
<path d="M207.6 152 l-1.1 4.5 h2.2z M207.6 367 l-1.1 -4.5 h2.2z" fill="#c8c83c" stroke="none"/>
<line x1="269.7" y1="219" x2="369" y2="260" stroke="#c8c83c"/>
<line x1="369" y1="205.5" x2="422" y2="205.5" stroke="#c8c83c"/>
<path d="M422 205.5 l-6 -1.4 v2.8z" fill="#c8c83c" stroke="none"/>
<line x1="327" y1="292.8" x2="369" y2="292.8" stroke="#c8c83c"/>
<path d="M327.5 292.8 l6 -1.4 v2.8z" fill="#c8c83c" stroke="none"/>
<line x1="368" y1="346.6" x2="399" y2="346.6" stroke="#c8c83c"/>
<path d="M398 346.6 l-6 -1.4 v2.8z" fill="#c8c83c" stroke="none"/>
</g>
<g transform="translate(0.00 0.00) rotate(0.0)" font-family="Liberation Serif" font-size="20.5" fill="#e8e83e"><text transform="translate(440.58 211.60) scale(0.660 1)">R</text><text transform="translate(452.93 211.60) scale(0.880 1)">2</text><text transform="translate(463.24 211.60) scale(0.880 1)">0</text></g>
<g transform="translate(0.00 0.00) rotate(0.0)" font-family="Liberation Serif" font-size="20.5" fill="#e8e83e"><text transform="translate(281.33 298.50) scale(0.660 1)">R</text><text transform="translate(293.74 298.50) scale(0.800 1)">1</text><text transform="translate(303.43 298.50) scale(0.880 1)">2</text><text transform="translate(311.17 298.50) scale(0.900 1)">,</text><text transform="translate(318.85 298.50) scale(0.880 1)">5</text></g>
<g transform="translate(0.00 0.00) rotate(0.0)" font-family="Liberation Serif" font-size="20.5" fill="#e8e83e"><text transform="translate(414.63 352.40) scale(0.660 1)">R</text><text transform="translate(425.72 352.40) scale(0.880 1)">7</text><text transform="translate(433.97 352.40) scale(0.900 1)">,</text><text transform="translate(442.25 352.40) scale(0.880 1)">5</text></g>
<g transform="translate(207.30 268.50) rotate(-90.0)" font-family="Liberation Serif" font-size="19.5" fill="#e8e83e"><text transform="translate(0.00 0.00) scale(0.880 1)">8</text><text transform="translate(10.25 0.00) scale(0.880 1)">0</text></g>
<text x="0" y="0" transform="translate(228.6 209.0) rotate(22.0) scale(0.68 1)" font-family="Liberation Serif" font-size="20" fill="#e8e83e" letter-spacing="4.9">R40</text>
<polygon points="314.50,366.70 313.44,366.78 312.38,366.81 311.31,366.78 310.23,366.69 309.16,366.55 308.09,366.35 307.03,366.09 305.97,365.77 304.93,365.40 303.91,364.97 302.90,364.48 301.91,363.94 300.96,363.34 300.02,362.70 299.12,361.99 298.26,361.24 297.43,360.44 296.64,359.59 295.89,358.70 295.19,357.77 294.53,356.79 293.93,355.78 293.37,354.73 292.87,353.65 292.43,352.53 292.04,351.39 291.71,350.23 291.44,349.04 291.24,347.84 291.09,346.62 291.02,345.39 291.00,344.15 291.05,342.91 291.17,341.66 291.36,340.42 291.61,339.18 291.92,337.95 292.31,336.74 292.76,335.54 293.27,334.36 293.85,333.21 294.49,332.08 295.19,330.98 295.95,329.92 296.77,328.89 297.65,327.91 298.58,326.96 299.57,326.07 300.61,325.22 301.69,324.43 302.82,323.69 303.99,323.01 305.20,322.39 306.45,321.83 307.72,321.33 309.03,320.91 310.37,320.55 311.73,320.25 313.11,320.03 314.50,319.89 314.50,333.19 316.60,333.13 318.69,332.97 320.78,332.69 322.84,332.31 324.88,331.82 326.90,331.22 328.88,330.52 330.82,329.72 332.71,328.81 334.56,327.81 336.35,326.72 338.08,325.53 339.75,324.25 341.34,322.88 342.87,321.44 344.31,319.91 345.68,318.32 346.96,316.65 348.15,314.92 349.24,313.13 350.25,311.28 351.15,309.39 351.95,307.45 352.66,305.47 353.25,303.45 353.74,301.41 354.12,299.34 354.40,297.26 354.56,295.17 354.62,293.07 354.56,290.97 354.40,288.88 354.12,286.79 353.74,284.73 353.25,282.69 352.66,280.67 351.95,278.69 351.15,276.75 350.25,274.86 349.24,273.01 348.15,271.22 346.96,269.49 345.68,267.82 344.31,266.22 342.87,264.70 341.34,263.25 339.75,261.89 338.08,260.61 336.35,259.42 334.56,258.32 332.71,257.32 330.82,256.42 328.88,255.61 326.90,254.91 324.88,254.32 322.84,253.83 320.78,253.44 318.69,253.17 316.60,253.00 314.50,252.95 314.50,266.25 311.35,266.17 308.21,265.92 305.08,265.51 301.98,264.93 298.92,264.20 295.90,263.30 292.93,262.25 290.01,261.05 287.17,259.69 284.40,258.18 281.71,256.54 279.12,254.75 276.61,252.83 274.22,250.79 271.93,248.62 269.76,246.33 267.72,243.94 265.80,241.43 264.01,238.84 262.37,236.15 260.86,233.38 259.50,230.54 258.30,227.62 257.25,224.65 256.35,221.63 255.62,218.57 255.04,215.47 254.63,212.34 254.38,209.20 254.30,206.05 254.38,202.90 254.63,199.76 255.04,196.63 255.62,193.53 256.35,190.47 257.25,187.45 258.30,184.48 259.50,181.56 260.86,178.72 262.37,175.95 264.01,173.26 265.80,170.67 267.72,168.16 269.76,165.77 271.93,163.48 274.22,161.31 276.61,159.27 279.12,157.35 281.71,155.56 284.40,153.92 287.17,152.41 290.01,151.05 292.93,149.85 295.90,148.80 298.92,147.90 301.98,147.17 305.08,146.59 308.21,146.18 311.35,145.93 314.50,145.85 314.50,145.85 317.48,145.94 320.45,146.12 323.41,146.37 326.37,146.69 329.31,147.10 332.24,147.58 335.16,148.14 338.06,148.77 340.94,149.48 343.80,150.26 346.63,151.12 349.45,152.05 352.23,153.05 354.99,154.13 357.71,155.28 360.41,156.49 363.07,157.78 365.69,159.14 368.27,160.56 370.82,162.05 373.33,163.60 375.79,165.22 378.21,166.91 380.58,168.65 382.90,170.46 385.18,172.32 387.40,174.24 389.58,176.22 391.69,178.25 393.76,180.34 395.77,182.48 397.71,184.67 399.61,186.91 401.44,189.20 403.21,191.53 404.91,193.91 406.55,196.33 408.13,198.79 409.65,201.30 411.09,203.83 412.47,206.41 413.78,209.02 415.02,211.66 416.19,214.33 417.29,217.02 418.31,219.75 419.27,222.50 420.15,225.27 420.96,228.06 421.70,230.88 422.36,233.71 422.95,236.55 423.46,239.41 423.89,242.27 424.26,245.15 424.54,248.03 424.75,250.92 424.88,253.82 424.94,256.71 424.93,259.60 424.83,262.49 424.66,265.37 424.42,268.25 424.10,271.12 423.71,273.98 423.24,276.82 422.69,279.65 422.08,282.47 421.39,285.26 420.63,288.04 419.79,290.79 418.89,293.52 417.91,296.22 416.87,298.89 415.75,301.54 414.57,304.15 413.32,306.73 412.00,309.28 410.62,311.79 409.17,314.26 407.66,316.69 406.09,319.08 404.45,321.42 402.76,323.72 401.01,325.98 399.20,328.19 397.33,330.34 395.41,332.45 393.43,334.51 391.41,336.51 389.33,338.45 387.20,340.34 385.03,342.18 382.81,343.95 380.54,345.67 378.23,347.32 375.88,348.91 373.49,350.44 371.07,351.91 368.60,353.31 366.11,354.65 363.58,355.92 361.01,357.12 358.42,358.25 355.80,359.32 353.16,360.31 350.49,361.24 347.80,362.09 345.09,362.87 342.36,363.59 339.62,364.23 336.86,364.79 334.09,365.29 331.31,365.71 328.52,366.06 325.72,366.33 322.92,366.54 320.11,366.66 317.31,366.72 314.50,366.70 314.50,366.70 317.30,366.61 320.10,366.44 322.89,366.20 325.67,365.89 328.44,365.51 331.20,365.05 333.95,364.53 336.68,363.93 339.39,363.26 342.08,362.52 344.74,361.71 347.39,360.83 350.01,359.88 352.60,358.86 355.17,357.78 357.70,356.63 360.20,355.42 362.67,354.14 365.10,352.80 367.50,351.39 369.85,349.93 372.17,348.40 374.44,346.81 376.67,345.17 378.85,343.47 380.99,341.71 383.08,339.90 385.13,338.04 387.12,336.12 389.06,334.16 390.94,332.14 392.77,330.08 394.55,327.97 396.27,325.81 397.93,323.62 399.53,321.38 401.07,319.10 402.56,316.78 403.97,314.43 405.33,312.04 406.62,309.62 407.85,307.17 409.02,304.68 410.11,302.17 411.14,299.63 412.11,297.07 413.00,294.48 413.83,291.87 414.59,289.25 415.27,286.60 415.89,283.94 416.44,281.27 416.92,278.58 417.33,275.89 417.66,273.18 417.93,270.47 418.12,267.76 418.24,265.04 418.29,262.32 418.28,259.60 418.18,256.88 418.02,254.17 417.79,251.47 417.49,248.78 417.11,246.09 416.67,243.42 416.16,240.76 415.57,238.12 414.92,235.49 414.20,232.88 413.42,230.30 412.56,227.74 411.64,225.20 410.66,222.69 409.61,220.21 408.49,217.75 407.32,215.33 406.08,212.94 404.77,210.59 403.41,208.27 401.99,205.99 400.51,203.74 398.97,201.54 397.38,199.38 395.73,197.27 394.03,195.20 392.27,193.18 390.47,191.20 388.61,189.27 386.70,187.40 384.75,185.57 382.75,183.80 380.71,182.08 378.62,180.42 376.49,178.81 374.32,177.26 372.12,175.77 369.87,174.33 367.59,172.96 365.28,171.65 362.93,170.40 360.56,169.21 358.15,168.08 355.72,167.02 353.26,166.03 350.78,165.10 348.27,164.23 345.75,163.43 343.20,162.70 340.64,162.04 338.07,161.44 335.48,160.91 332.88,160.45 330.27,160.06 327.65,159.73 325.02,159.48 322.39,159.29 319.76,159.18 317.13,159.13 314.50,159.15 314.50,159.15 312.05,159.21 309.60,159.41 307.16,159.73 304.75,160.17 302.36,160.75 300.01,161.45 297.69,162.27 295.42,163.20 293.21,164.26 291.05,165.43 288.96,166.72 286.93,168.11 284.98,169.60 283.12,171.20 281.34,172.89 279.65,174.67 278.05,176.53 276.56,178.48 275.17,180.51 273.88,182.60 272.71,184.76 271.65,186.97 270.72,189.24 269.90,191.56 269.20,193.91 268.62,196.30 268.18,198.71 267.86,201.15 267.66,203.60 267.60,206.05 267.66,208.50 267.86,210.95 268.18,213.39 268.62,215.80 269.20,218.19 269.90,220.54 270.72,222.86 271.65,225.13 272.71,227.34 273.88,229.50 275.17,231.59 276.56,233.62 278.05,235.57 279.65,237.43 281.34,239.21 283.12,240.90 284.98,242.50 286.93,243.99 288.96,245.38 291.05,246.67 293.21,247.84 295.42,248.90 297.69,249.83 300.01,250.65 302.36,251.35 304.75,251.93 307.16,252.37 309.60,252.69 312.05,252.89 314.50,252.95 314.50,266.25 315.90,266.29 317.30,266.40 318.70,266.58 320.08,266.84 321.44,267.16 322.79,267.56 324.11,268.03 325.41,268.57 326.68,269.17 327.91,269.84 329.11,270.58 330.26,271.37 331.38,272.23 332.45,273.14 333.46,274.11 334.43,275.12 335.34,276.19 336.20,277.31 336.99,278.46 337.73,279.66 338.40,280.89 339.00,282.16 339.54,283.46 340.01,284.78 340.40,286.13 340.73,287.49 340.99,288.87 341.17,290.27 341.28,291.67 341.32,293.07 341.28,294.47 341.17,295.87 340.99,297.26 340.73,298.64 340.40,300.01 340.01,301.36 339.54,302.68 339.00,303.98 338.40,305.24 337.73,306.48 336.99,307.68 336.20,308.83 335.34,309.95 334.43,311.01 333.46,312.03 332.45,313.00 331.38,313.91 330.26,314.77 329.11,315.56 327.91,316.29 326.68,316.96 325.41,317.57 324.11,318.11 322.79,318.57 321.44,318.97 320.08,319.30 318.70,319.56 317.30,319.74 315.90,319.85 314.50,319.89 314.50,333.19 313.79,333.10 313.07,333.04 312.35,333.02 311.62,333.05 310.88,333.11 310.14,333.21 309.41,333.36 308.68,333.54 307.95,333.76 307.23,334.03 306.52,334.33 305.82,334.68 305.14,335.06 304.47,335.48 303.83,335.95 303.20,336.44 302.60,336.98 302.02,337.55 301.47,338.16 300.95,338.79 300.46,339.46 300.00,340.16 299.58,340.89 299.20,341.65 298.85,342.43 298.54,343.23 298.28,344.05 298.06,344.89 297.88,345.75 297.74,346.62 297.66,347.50 297.62,348.39 297.62,349.29 297.68,350.19 297.78,351.10 297.93,352.00 298.13,352.90 298.38,353.79 298.68,354.68 299.03,355.55 299.42,356.41 299.87,357.25 300.36,358.07 300.89,358.87 301.48,359.64 302.10,360.39 302.77,361.11 303.48,361.79 304.23,362.44 305.01,363.05 305.84,363.62 306.69,364.15 307.58,364.64 308.50,365.08 309.45,365.48 310.42,365.83 311.41,366.12 312.42,366.37 313.45,366.56 314.50,366.70" fill="#fbd774"/>
<circle cx="314.50" cy="259.60" r="107.10" fill="none" stroke="#ffffff" stroke-opacity="0.16" stroke-width="1.1"/>
<circle cx="314.50" cy="206.05" r="53.55" fill="none" stroke="#ffffff" stroke-opacity="0.16" stroke-width="1.1"/>
<circle cx="314.50" cy="293.07" r="33.47" fill="none" stroke="#ffffff" stroke-opacity="0.16" stroke-width="1.1"/>
<circle cx="314.50" cy="346.62" r="20.08" fill="none" stroke="#ffffff" stroke-opacity="0.16" stroke-width="1.1"/>
<g stroke="#b4b4b4" fill="none" stroke-width="0.9">
<rect x="58.5" y="424.5" width="5" height="5"/>
<line x1="61" y1="424.5" x2="61" y2="406"/><path d="M61 399 l-2.5 7 h5z"/>
<line x1="63.5" y1="427" x2="83" y2="427"/><path d="M90 427 l-7 -2.5 v5z"/>
<path d="M58.5 388 l2.5 3 l2.5 -3 M61 391 v3"/>
<path d="M95 425 l5 6 M100 425 l-5 6"/>
</g>
<g>
<rect x="479.5" y="419.5" width="94" height="5.5" fill="none" stroke="#9a9a9a" stroke-width="1"/>
<rect x="480" y="422" width="13" height="2.5" fill="#9a9a9a"/>
<rect x="493" y="420" width="26" height="2" fill="#d8d8d8"/>
<rect x="519" y="422" width="54" height="2.5" fill="#9a9a9a"/>
<g font-family="Liberation Sans" font-size="6" fill="#a0a0a0"><text x="490" y="418">5</text><text x="566" y="418">35</text><text x="477" y="432">0</text><text x="515" y="432">15</text></g>
<rect x="582.5" y="435.5" width="7" height="6" fill="none" stroke="#c0c0c0"/>
</g>
</svg>
</body></html>
